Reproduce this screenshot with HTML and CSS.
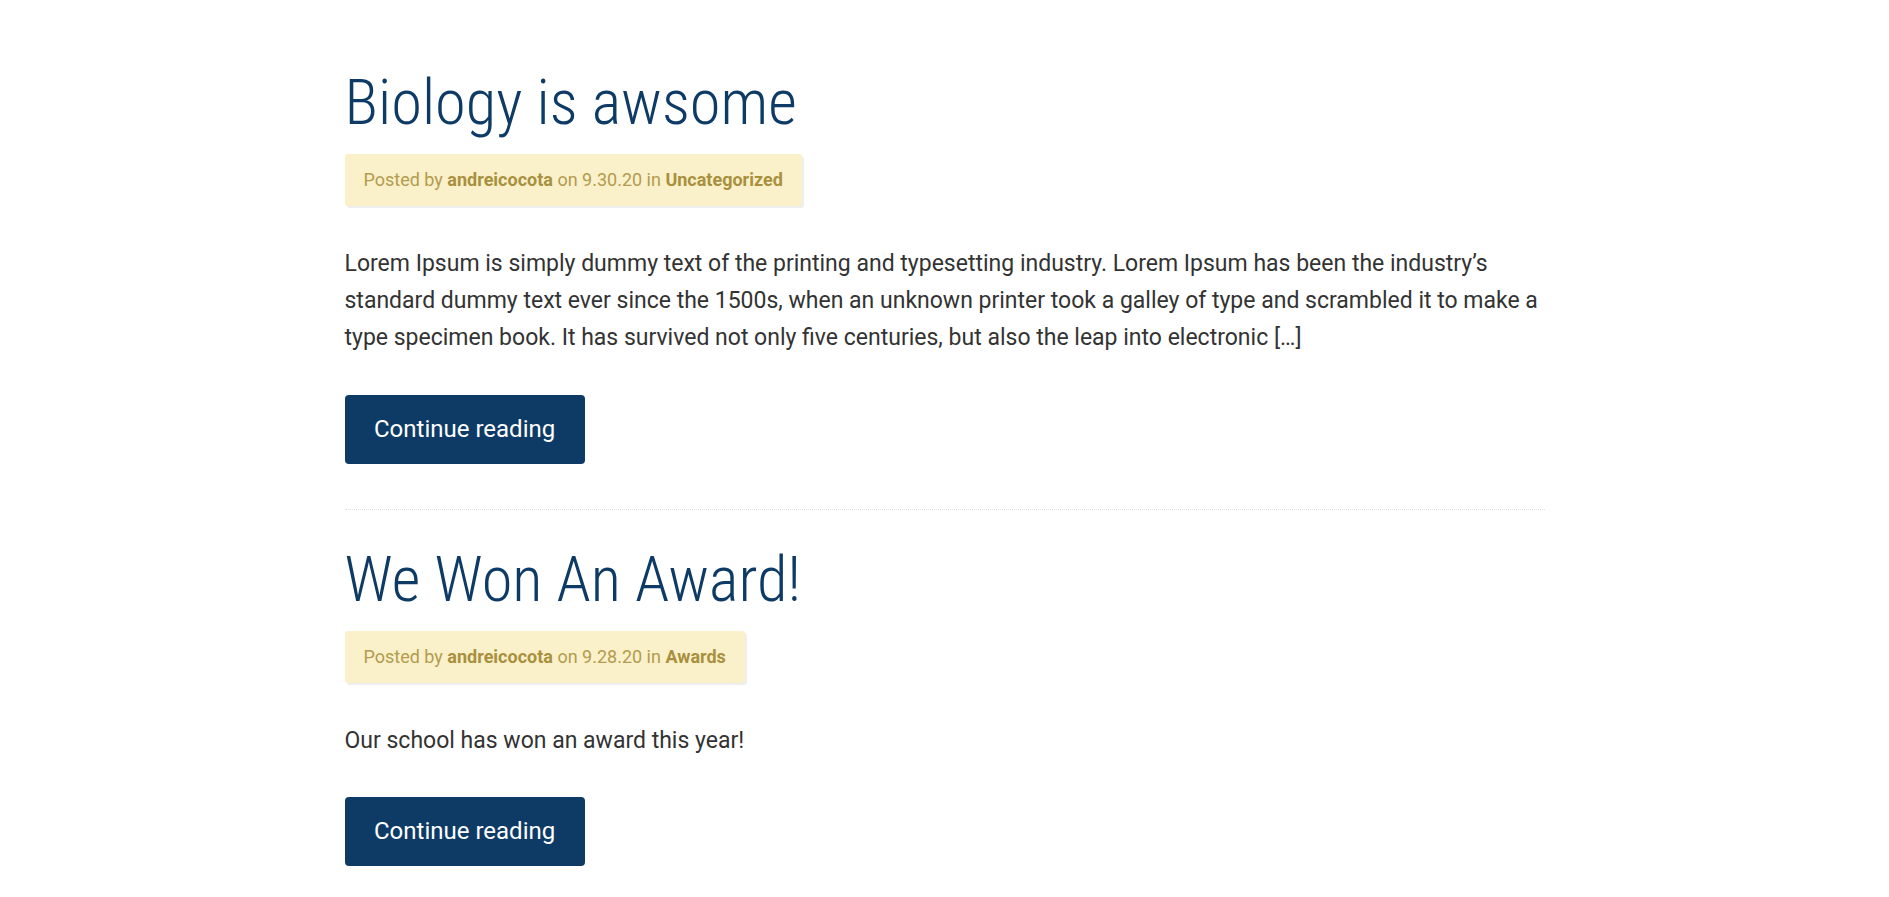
FILE: index.html
```html
<!DOCTYPE html>
<html lang="en">
<head>
<meta charset="utf-8">
<title>Blog</title>
<link rel="stylesheet" href="styles.css">
</head>
<body>
<main class="container">
  <article class="post-item">
    <h2 class="headline"><a href="#">Biology is awsome</a></h2>
    <div class="metabox">Posted by <a href="#">andreicocota</a> on 9.30.20 in <a href="#">Uncategorized</a></div>
    <p class="excerpt">Lorem Ipsum is simply dummy text of the printing and typesetting industry. Lorem Ipsum has been the industry’s standard dummy text ever since the 1500s, when an unknown printer took a galley of type and scrambled it to make a type specimen book. It has survived not only five centuries, but also the leap into electronic […]</p>
    <a class="btn" href="#">Continue reading</a>
  </article>
  <article class="post-item">
    <h2 class="headline"><a href="#">We Won An Award!</a></h2>
    <div class="metabox">Posted by <a href="#">andreicocota</a> on 9.28.20 in <a href="#">Awards</a></div>
    <p class="excerpt">Our school has won an award this year!</p>
    <a class="btn" href="#">Continue reading</a>
  </article>
</main>
</body>
</html>
```
FILE: styles.css
```css
html, body {
  margin: 0;
  padding: 0;
  background: #fff;
}

body {
  font-family: Roboto, "Noto Sans", "Liberation Sans", sans-serif;
  color: #333;
}

.container {
  max-width: 1200px;
  margin: 0 auto;
  padding-top: 65px;
}

.post-item {
  display: flex;
  flex-direction: column;
  align-items: flex-start;
  border-bottom: 1px dotted #dedede;
  padding-bottom: 45px;
  margin-bottom: 32px;
}

.headline {
  margin: 0 0 13px;
  font-family: "Roboto Condensed", Roboto, sans-serif;
  font-weight: 300;
  font-size: 62.5px;
  line-height: 75.6px;
}

.headline a {
  color: #0d3b66;
  text-decoration: none;
}

.metabox {
  background-color: #faf0ca;
  color: #b39c4d;
  font-size: 18px;
  line-height: 22px;
  padding: 15px 19px;
  border-radius: 3px;
  box-shadow: 2px 2px 1px rgba(0, 0, 0, 0.07);
}

.metabox a {
  color: #a8903e;
  font-weight: 700;
  text-decoration: none;
}

.excerpt {
  margin: 39px 0 38.5px;
  font-size: 23px;
  line-height: 37.3px;
}

.btn {
  display: inline-block;
  background-color: #0d3b66;
  color: #fff;
  font-size: 24px;
  line-height: 29px;
  padding: 20px 29.5px;
  border-radius: 4px;
  text-decoration: none;
}
```
